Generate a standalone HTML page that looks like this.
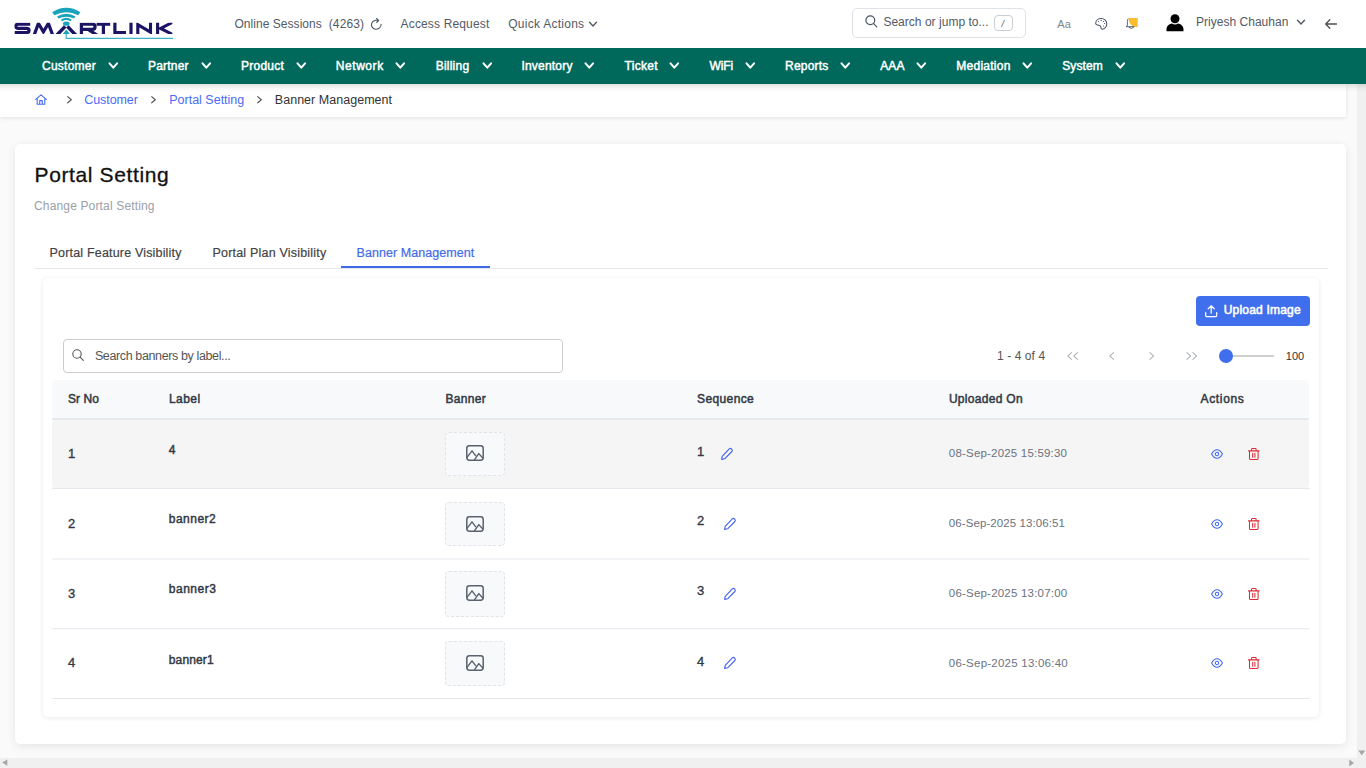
<!DOCTYPE html>
<html><head><meta charset="utf-8"><title>Banner Management</title>
<style>
*{box-sizing:border-box;margin:0;padding:0}
html,body{width:1366px;height:768px;overflow:hidden;background:#fafafa;font-family:"Liberation Sans",sans-serif;color:#212529}
.t{position:absolute;white-space:pre}
.a{position:absolute}
svg{position:absolute;overflow:visible}
#top{left:0;top:0;width:1366px;height:48px;background:#fff}
#nav{left:0;top:48px;width:1366px;height:36px;background:#00695c}
#crumb{left:0;top:84px;width:1346px;height:33px;background:#fff;box-shadow:0 1px 4px rgba(0,0,0,.10)}
#navsh{left:0;top:84px;width:1366px;height:8px;background:linear-gradient(rgba(0,0,0,.11),rgba(0,0,0,.03) 55%,rgba(0,0,0,0))}
#vs{left:1357px;top:84px;width:9px;height:674px;background:#f0f0f0}
#hs{left:0;top:758px;width:1366px;height:10px;background:#f0f0f0}
#card{left:15px;top:144px;width:1331px;height:600px;background:#fff;border-radius:5px;box-shadow:0 2px 8px rgba(0,0,0,.085)}
#card2{left:43px;top:278px;width:1275.5px;height:438.5px;background:#fff;border-radius:5px;box-shadow:0 1px 5px rgba(0,0,0,.085)}
</style></head><body>
<div id="top" class="a"></div><svg style="left:0;top:0" width="200" height="48" viewBox="0 0 200 48"><defs><clipPath id="lc"><rect x="14.3" y="22.7" width="158.1" height="11.4"/></clipPath></defs><g fill="none" stroke="#1b1464" stroke-width="3.2" stroke-linejoin="miter" clip-path="url(#lc)"><path d="M30.2 24.2 H18.4 Q15.8 24.2 15.8 26.3 Q15.8 28.4 18.4 28.4 H26.5 Q29.1 28.4 29.1 30.5 Q29.1 32.6 26.5 32.6 H14.6"/><path d="M33.8 36 L38.4 23.4 L43.4 31.8 L48.4 23.4 L53 36" stroke-width="3.2"/><path d="M55.6 36.4 L65.2 26.4 M77 36.4 L67.4 26.4" stroke-width="3.5"/><path d="M81.4 36 V24.2 H92.2 Q95.1 24.2 95.1 26.8 Q95.1 29.4 92.2 29.4 H81.4 M88 29.4 L97 35"/><path d="M96.6 24.2 H110.2 M103.4 24.2 V36"/><path d="M114.9 20 V32.6 H126"/><path d="M131 20 V36"/><path d="M137.8 36 V24.6 L150.5 32.2 V20" stroke-width="3.1"/><path d="M157.6 20 V36 M174 21.6 L160.6 28.4 L174 35.2" stroke-width="3.1"/></g><g fill="#1ba3bd"><path d="M52.2 12.3 Q66.3 3.4 80.4 12.3 L78.2 15.2 Q66.3 9.2 54.4 15.2 Z"/><path d="M57 16.4 Q66.3 11 75.6 16.4 L74 18.5 Q66.3 14.8 58.6 18.5 Z"/><path d="M60.8 19.8 Q66.3 15.8 71.8 19.8 L70.6 21.2 Q66.3 18.6 62 21.2 Z"/></g><ellipse cx="66.3" cy="23.7" rx="3.3" ry="2.1" fill="#1ba3bd"/><path d="M66.3 29.4 L62.8 33.9 H69.8 Z" fill="#1ba3bd"/><path d="M66.2 33.8 V38.3 H173" fill="none" stroke="#3fb2ca" stroke-width="1.2"/></svg><span class="t" style="left:234.5px;top:14px;font-size:12px;line-height:20px;color:#525a65;letter-spacing:0.039px;">Online Sessions</span><span class="t" style="left:328.7px;top:14px;font-size:12px;line-height:20px;color:#525a65;letter-spacing:0.135px;">(4263)</span><svg style="left:371px;top:18px" width="11" height="12" viewBox="0 0 11 12"><path d="M7.2 2.6 A4.8 4.5 0 1 0 10.05 6.4" fill="none" stroke="#4b5563" stroke-width="1.1" stroke-linecap="round"/><path d="M5.5 0.5 L7.7 2.4 L5.7 4.5" fill="none" stroke="#4b5563" stroke-width="1.1" stroke-linecap="round" stroke-linejoin="round"/></svg><span class="t" style="left:400.6px;top:14px;font-size:12px;line-height:20px;color:#525a65;letter-spacing:0.149px;">Access Request</span><span class="t" style="left:508.2px;top:14px;font-size:12px;line-height:20px;color:#525a65;letter-spacing:0.269px;">Quick Actions</span><svg style="left:589px;top:21.6px" width="8" height="4.6" viewBox="0 0 8 4.6"><path d="M0.5 0.3 L4.0 4.1 L7.5 0.3" fill="none" stroke="#525a65" stroke-width="1.4" stroke-linecap="round" stroke-linejoin="round"/></svg><div class="a" style="left:852px;top:8px;width:174px;height:30px;border:1px solid #dfe3e8;border-radius:5px;background:#fff"></div><svg style="left:865px;top:15px" width="13" height="13" viewBox="0 0 13 13"><circle cx="5.3" cy="5.3" r="4.4" fill="none" stroke="#4b5563" stroke-width="1.2"/><path d="M8.6 8.6 L11.8 11.8" stroke="#4b5563" stroke-width="1.2" stroke-linecap="round"/></svg><span class="t" style="left:883.4px;top:12px;font-size:12px;line-height:20px;color:#525a65;letter-spacing:0.024px;">Search or jump to...</span><div class="a" style="left:994px;top:15px;width:19px;height:16px;border:1px solid #c9ced4;border-radius:4px;background:#fff"></div><span class="t" style="left:1001.5px;top:16px;font-size:9px;line-height:16px;color:#555;font-style:italic;">/</span><span class="t" style="left:1057.3px;top:15px;font-size:11px;line-height:18px;color:#7d848c;letter-spacing:0.116px;">Aa</span><svg style="left:1095px;top:18px" width="13" height="12" viewBox="0 0 13 12"><path d="M0.7 5.5 C0.7 2.6 3.2 0.6 6.3 0.6 C9.4 0.6 11.8 2.8 11.8 5.7 C11.8 8.6 9.8 11.1 7.3 11.2 C6.5 11.2 6.1 10.8 6 10.2 L5.7 8.7 C5.5 7.9 5.1 7.6 4.4 7.4 L1.8 6.7 C1.1 6.5 0.7 6.1 0.7 5.5 Z" fill="none" stroke="#4b5563" stroke-width="1.05" stroke-linejoin="round"/><g fill="#4b5563"><circle cx="3.6" cy="3.3" r="0.62"/><circle cx="6.2" cy="2.4" r="0.62"/><circle cx="8.5" cy="3.3" r="0.62"/><circle cx="9.6" cy="5.5" r="0.62"/><circle cx="8.5" cy="8" r="0.62"/></g></svg><svg style="left:1125px;top:17px" width="14" height="14" viewBox="0 0 14 14"><defs><clipPath id="bc"><rect x="3.3" y="1.1" width="9.4" height="8.8"/></clipPath></defs><circle cx="12.7" cy="1.1" r="9.3" fill="#fabe2c" clip-path="url(#bc)"/><path d="M3 2 Q2.4 2.8 2.4 4.4 V8.2 Q2.4 9.2 1 9.7 H9" fill="none" stroke="#4b5563" stroke-width="0.9" stroke-linecap="round" stroke-linejoin="round"/><path d="M4.2 10.4 Q6.4 12.8 8.6 10.4" fill="none" stroke="#4b5563" stroke-width="0.95" stroke-linecap="round"/></svg><svg style="left:1165.8px;top:13.5px" width="18" height="18" viewBox="0 0 18 18"><circle cx="9" cy="4.7" r="4.5" fill="#000"/><path d="M0.5 17.2 V15.2 C0.5 12 3.6 9.9 6 9.6 Q9 11.4 12 9.6 C14.4 9.9 17.5 12 17.5 15.2 V17.2 Z" fill="#000"/></svg><span class="t" style="left:1196px;top:12px;font-size:12px;line-height:20px;color:#525a65;letter-spacing:0.023px;">Priyesh Chauhan</span><svg style="left:1296.8px;top:19.6px" width="8" height="4.6" viewBox="0 0 8 4.6"><path d="M0.5 0.3 L4.0 4.1 L7.5 0.3" fill="none" stroke="#525a65" stroke-width="1.4" stroke-linecap="round" stroke-linejoin="round"/></svg><svg style="left:1325px;top:19px" width="12" height="10" viewBox="0 0 12 10"><path d="M11.5 5 H0.8 M4.8 0.8 L0.7 5 L4.8 9.2" fill="none" stroke="#495057" stroke-width="1.3" stroke-linecap="round" stroke-linejoin="round"/></svg>
<div id="nav" class="a"></div><span class="t" style="left:42px;top:56px;font-size:12px;line-height:20px;color:#fff;letter-spacing:0.248px;-webkit-text-stroke:0.45px #fff;">Customer</span><svg style="left:109px;top:63.2px" width="8.6" height="5.2" viewBox="0 0 8.6 5.2"><path d="M0.5 0.3 L4.3 4.7 L8.1 0.3" fill="none" stroke="#fff" stroke-width="2.0" stroke-linecap="round" stroke-linejoin="round"/></svg><span class="t" style="left:148px;top:56px;font-size:12px;line-height:20px;color:#fff;letter-spacing:0.192px;-webkit-text-stroke:0.45px #fff;">Partner</span><svg style="left:202px;top:63.2px" width="8.6" height="5.2" viewBox="0 0 8.6 5.2"><path d="M0.5 0.3 L4.3 4.7 L8.1 0.3" fill="none" stroke="#fff" stroke-width="2.0" stroke-linecap="round" stroke-linejoin="round"/></svg><span class="t" style="left:241px;top:56px;font-size:12px;line-height:20px;color:#fff;letter-spacing:0.234px;-webkit-text-stroke:0.45px #fff;">Product</span><svg style="left:296.5px;top:63.2px" width="8.6" height="5.2" viewBox="0 0 8.6 5.2"><path d="M0.5 0.3 L4.3 4.7 L8.1 0.3" fill="none" stroke="#fff" stroke-width="2.0" stroke-linecap="round" stroke-linejoin="round"/></svg><span class="t" style="left:335.8px;top:56px;font-size:12px;line-height:20px;color:#fff;letter-spacing:0.555px;-webkit-text-stroke:0.45px #fff;">Network</span><svg style="left:396.4px;top:63.2px" width="8.6" height="5.2" viewBox="0 0 8.6 5.2"><path d="M0.5 0.3 L4.3 4.7 L8.1 0.3" fill="none" stroke="#fff" stroke-width="2.0" stroke-linecap="round" stroke-linejoin="round"/></svg><span class="t" style="left:435.7px;top:56px;font-size:12px;line-height:20px;color:#fff;letter-spacing:0.226px;-webkit-text-stroke:0.45px #fff;">Billing</span><svg style="left:482.5px;top:63.2px" width="8.6" height="5.2" viewBox="0 0 8.6 5.2"><path d="M0.5 0.3 L4.3 4.7 L8.1 0.3" fill="none" stroke="#fff" stroke-width="2.0" stroke-linecap="round" stroke-linejoin="round"/></svg><span class="t" style="left:521.4px;top:56px;font-size:12px;line-height:20px;color:#fff;letter-spacing:0.205px;-webkit-text-stroke:0.45px #fff;">Inventory</span><svg style="left:585.3px;top:63.2px" width="8.6" height="5.2" viewBox="0 0 8.6 5.2"><path d="M0.5 0.3 L4.3 4.7 L8.1 0.3" fill="none" stroke="#fff" stroke-width="2.0" stroke-linecap="round" stroke-linejoin="round"/></svg><span class="t" style="left:624.5px;top:56px;font-size:12px;line-height:20px;color:#fff;letter-spacing:0.306px;-webkit-text-stroke:0.45px #fff;">Ticket</span><svg style="left:670.4px;top:63.2px" width="8.6" height="5.2" viewBox="0 0 8.6 5.2"><path d="M0.5 0.3 L4.3 4.7 L8.1 0.3" fill="none" stroke="#fff" stroke-width="2.0" stroke-linecap="round" stroke-linejoin="round"/></svg><span class="t" style="left:709.5px;top:56px;font-size:12px;line-height:20px;color:#fff;letter-spacing:-0.125px;-webkit-text-stroke:0.45px #fff;">WiFi</span><svg style="left:746.2px;top:63.2px" width="8.6" height="5.2" viewBox="0 0 8.6 5.2"><path d="M0.5 0.3 L4.3 4.7 L8.1 0.3" fill="none" stroke="#fff" stroke-width="2.0" stroke-linecap="round" stroke-linejoin="round"/></svg><span class="t" style="left:785px;top:56px;font-size:12px;line-height:20px;color:#fff;letter-spacing:0.21px;-webkit-text-stroke:0.45px #fff;">Reports</span><svg style="left:841px;top:63.2px" width="8.6" height="5.2" viewBox="0 0 8.6 5.2"><path d="M0.5 0.3 L4.3 4.7 L8.1 0.3" fill="none" stroke="#fff" stroke-width="2.0" stroke-linecap="round" stroke-linejoin="round"/></svg><span class="t" style="left:880.3px;top:56px;font-size:12px;line-height:20px;color:#fff;letter-spacing:0.061px;-webkit-text-stroke:0.45px #fff;">AAA</span><svg style="left:916.6px;top:63.2px" width="8.6" height="5.2" viewBox="0 0 8.6 5.2"><path d="M0.5 0.3 L4.3 4.7 L8.1 0.3" fill="none" stroke="#fff" stroke-width="2.0" stroke-linecap="round" stroke-linejoin="round"/></svg><span class="t" style="left:956.3px;top:56px;font-size:12px;line-height:20px;color:#fff;letter-spacing:0.252px;-webkit-text-stroke:0.45px #fff;">Mediation</span><svg style="left:1023.3px;top:63.2px" width="8.6" height="5.2" viewBox="0 0 8.6 5.2"><path d="M0.5 0.3 L4.3 4.7 L8.1 0.3" fill="none" stroke="#fff" stroke-width="2.0" stroke-linecap="round" stroke-linejoin="round"/></svg><span class="t" style="left:1062.2px;top:56px;font-size:12px;line-height:20px;color:#fff;letter-spacing:0.097px;-webkit-text-stroke:0.45px #fff;">System</span><svg style="left:1116px;top:63.2px" width="8.6" height="5.2" viewBox="0 0 8.6 5.2"><path d="M0.5 0.3 L4.3 4.7 L8.1 0.3" fill="none" stroke="#fff" stroke-width="2.0" stroke-linecap="round" stroke-linejoin="round"/></svg>
<div id="crumb" class="a"></div><svg style="left:35px;top:94px" width="12" height="11" viewBox="0 0 12 11"><path d="M0.7 5.4 L6 0.8 L11.3 5.4 M2.2 4.4 V10.3 H9.8 V4.4 M4.7 10.3 V6.6 H7.3 V10.3" fill="none" stroke="#4a6cf7" stroke-width="1.1" stroke-linecap="round" stroke-linejoin="round"/></svg><svg style="left:66.7px;top:96.2px" width="5" height="7.4" viewBox="0 0 5 7.4"><path d="M0.7 0.6 L4.3 3.7 L0.7 6.8" fill="none" stroke="#555" stroke-width="1.15" stroke-linecap="round" stroke-linejoin="round"/></svg><span class="t" style="left:84.3px;top:90px;font-size:12.5px;line-height:20px;color:#4a6cf7;letter-spacing:-0.086px;">Customer</span><svg style="left:151.3px;top:96.2px" width="5" height="7.4" viewBox="0 0 5 7.4"><path d="M0.7 0.6 L4.3 3.7 L0.7 6.8" fill="none" stroke="#555" stroke-width="1.15" stroke-linecap="round" stroke-linejoin="round"/></svg><span class="t" style="left:169.2px;top:90px;font-size:12.5px;line-height:20px;color:#4a6cf7;letter-spacing:0.004px;">Portal Setting</span><svg style="left:256.8px;top:96.2px" width="5" height="7.4" viewBox="0 0 5 7.4"><path d="M0.7 0.6 L4.3 3.7 L0.7 6.8" fill="none" stroke="#555" stroke-width="1.15" stroke-linecap="round" stroke-linejoin="round"/></svg><span class="t" style="left:274.8px;top:90px;font-size:12.5px;line-height:20px;color:#333;letter-spacing:0.032px;">Banner Management</span>
<div id="card" class="a"></div><div id="card2" class="a"></div>
<span class="t" style="left:34.5px;top:160px;font-size:21px;line-height:29px;color:#111;letter-spacing:0.63px;-webkit-text-stroke:0.3px #111;">Portal Setting</span><span class="t" style="left:34px;top:196px;font-size:12px;line-height:20px;color:#9aa0a8;letter-spacing:0.156px;">Change Portal Setting</span><span class="t" style="left:49.6px;top:243px;font-size:12.5px;line-height:20px;color:#444;letter-spacing:0.176px;-webkit-text-stroke:0.2px #444;">Portal Feature Visibility</span><span class="t" style="left:212.5px;top:243px;font-size:12.5px;line-height:20px;color:#444;letter-spacing:0.198px;-webkit-text-stroke:0.2px #444;">Portal Plan Visibility</span><span class="t" style="left:356.6px;top:243px;font-size:12.5px;line-height:20px;color:#3f6be8;letter-spacing:0.05px;-webkit-text-stroke:0.2px #3f6be8;">Banner Management</span><div class="a" style="left:34px;top:268px;width:1294px;height:1px;background:#e6e7e9"></div><div class="a" style="left:341px;top:266px;width:149px;height:2px;background:#3f6be8"></div>
<div class="a" style="left:1196px;top:296px;width:114px;height:30px;background:#3f6fec;border-radius:4px"></div><svg style="left:1205px;top:304.5px" width="12.4" height="12.4" viewBox="0 0 12.4 12.4"><path d="M6.2 8.2 V1 M3.2 3.8 L6.2 0.8 L9.2 3.8 M0.7 7.6 V10.4 Q0.7 11.7 2 11.7 H10.4 Q11.7 11.7 11.7 10.4 V7.6" fill="none" stroke="#fff" stroke-width="1.25" stroke-linecap="round" stroke-linejoin="round"/></svg><span class="t" style="left:1223.7px;top:300px;font-size:12px;line-height:20px;color:#fff;letter-spacing:0.207px;-webkit-text-stroke:0.55px #fff;">Upload Image</span><div class="a" style="left:63px;top:339px;width:500px;height:34px;border:1px solid #c9cdd2;border-radius:4px;background:#fff"></div><svg style="left:72.4px;top:349.4px" width="12" height="12" viewBox="0 0 12 12"><circle cx="5" cy="5" r="4.2" fill="none" stroke="#555" stroke-width="1.1"/><path d="M8.1 8.1 L11.3 11.3" stroke="#555" stroke-width="1.1" stroke-linecap="round"/></svg><span class="t" style="left:94.9px;top:346px;font-size:12.5px;line-height:20px;color:#555;letter-spacing:-0.374px;">Search banners by label...</span><span class="t" style="left:997px;top:346px;font-size:12px;line-height:20px;color:#555;letter-spacing:0.083px;">1 - 4 of 4</span><svg style="left:1067px;top:352px" width="5.4" height="8" viewBox="0 0 5.4 8"><path d="M4.6 0.6 L0.8 4 L4.6 7.4" fill="none" stroke="#b4b8bd" stroke-width="1.1" stroke-linecap="round" stroke-linejoin="round"/></svg><svg style="left:1073px;top:352px" width="5.4" height="8" viewBox="0 0 5.4 8"><path d="M4.6 0.6 L0.8 4 L4.6 7.4" fill="none" stroke="#b4b8bd" stroke-width="1.1" stroke-linecap="round" stroke-linejoin="round"/></svg><svg style="left:1109.3px;top:352px" width="5.4" height="8" viewBox="0 0 5.4 8"><path d="M4.6 0.6 L0.8 4 L4.6 7.4" fill="none" stroke="#b4b8bd" stroke-width="1.1" stroke-linecap="round" stroke-linejoin="round"/></svg><svg style="left:1148.8px;top:352px" width="5.4" height="8" viewBox="0 0 5.4 8"><path d="M0.8 0.6 L4.6 4 L0.8 7.4" fill="none" stroke="#b4b8bd" stroke-width="1.1" stroke-linecap="round" stroke-linejoin="round"/></svg><svg style="left:1186.3px;top:352px" width="5.4" height="8" viewBox="0 0 5.4 8"><path d="M0.8 0.6 L4.6 4 L0.8 7.4" fill="none" stroke="#b4b8bd" stroke-width="1.1" stroke-linecap="round" stroke-linejoin="round"/></svg><svg style="left:1192.3px;top:352px" width="5.4" height="8" viewBox="0 0 5.4 8"><path d="M0.8 0.6 L4.6 4 L0.8 7.4" fill="none" stroke="#b4b8bd" stroke-width="1.1" stroke-linecap="round" stroke-linejoin="round"/></svg><div class="a" style="left:1226px;top:354.7px;width:48px;height:2px;background:#cfcfcf"></div><div class="a" style="left:1218.8px;top:348.5px;width:14.6px;height:14.6px;border-radius:50%;background:#3f6fec"></div><span class="t" style="left:1285.8px;top:347px;font-size:11px;line-height:18px;color:#333;letter-spacing:0.014px;">100</span>
<div class="a" style="left:52px;top:380.3px;width:1257px;height:38px;background:#f8f9fb;border-radius:5px 5px 0 0"></div><div class="a" style="left:52px;top:418px;width:1257px;height:1.6px;background:#e6e9ed"></div><span class="t" style="left:67.9px;top:389px;font-size:12px;line-height:20px;color:#333a45;letter-spacing:0.102px;-webkit-text-stroke:0.5px #333a45;">Sr No</span><span class="t" style="left:168.9px;top:389px;font-size:12px;line-height:20px;color:#333a45;letter-spacing:0.485px;-webkit-text-stroke:0.5px #333a45;">Label</span><span class="t" style="left:445.5px;top:389px;font-size:12px;line-height:20px;color:#333a45;letter-spacing:0.299px;-webkit-text-stroke:0.5px #333a45;">Banner</span><span class="t" style="left:697.1px;top:389px;font-size:12px;line-height:20px;color:#333a45;letter-spacing:0.369px;-webkit-text-stroke:0.5px #333a45;">Sequence</span><span class="t" style="left:948.9px;top:389px;font-size:12px;line-height:20px;color:#333a45;letter-spacing:0.298px;-webkit-text-stroke:0.5px #333a45;">Uploaded On</span><span class="t" style="left:1200.6px;top:389px;font-size:12px;line-height:20px;color:#333a45;letter-spacing:0.634px;-webkit-text-stroke:0.5px #333a45;">Actions</span><div class="a" style="left:52px;top:419.60px;width:1257px;height:68.40px;background:#f5f5f5;border-radius:3px"></div><div class="a" style="left:52px;top:488px;width:1257.5px;height:1px;background:rgb(227, 231, 236);border-radius:0 0 3px 3px"></div><span class="t" style="left:67.9px;top:443px;font-size:13px;line-height:21px;color:#323844;-webkit-text-stroke:0.35px #323844;">1</span><span class="t" style="left:168.8px;top:440px;font-size:12px;line-height:20px;color:#323844;-webkit-text-stroke:0.45px #323844;">4</span><div class="a" style="left:445px;top:432px;width:60px;height:44px;border:1px dashed #e0e4e9;border-radius:4px;background:#f8f9fb"></div><svg style="left:466px;top:445px" width="18" height="16" viewBox="0 0 18 16"><rect x="0.8" y="0.8" width="16.4" height="14.4" rx="2.6" fill="none" stroke="#5a6270" stroke-width="1.5"/><path d="M1.2 12.2 L6 5.8 L9.6 10.6 M8.6 14.6 L12.8 8.6 L16.8 13" fill="none" stroke="#5a6270" stroke-width="1.4" stroke-linejoin="round" stroke-linecap="round"/></svg><span class="t" style="left:696.9px;top:441px;font-size:13px;line-height:21px;color:#323844;-webkit-text-stroke:0.35px #323844;">1</span><svg style="left:721px;top:447.80px" width="12" height="12" viewBox="0 0 12 12"><path d="M8.3 0.9 Q9.5 -0.1 10.7 1.1 Q11.9 2.3 10.9 3.5 L3.6 10.8 L0.6 11.4 L1.2 8.4 Z" fill="none" stroke="#4361ee" stroke-width="1.1" stroke-linejoin="round"/></svg><span class="t" style="left:948.8px;top:444px;font-size:11.5px;line-height:18px;color:#6b7280;letter-spacing:0.197px;">08-Sep-2025 15:59:30</span><svg style="left:1210.8px;top:448.60px" width="12" height="10" viewBox="0 0 12 10"><path d="M0.6 5 C2 2.4 3.8 0.7 6 0.7 C8.2 0.7 10 2.4 11.4 5 C10 7.6 8.2 9.3 6 9.3 C3.8 9.3 2 7.6 0.6 5 Z" fill="none" stroke="#3d66f0" stroke-width="1.05" stroke-linejoin="round"/><circle cx="6" cy="5" r="1.7" fill="none" stroke="#3d66f0" stroke-width="1.05"/></svg><svg style="left:1247.7px;top:447.80px" width="11.6" height="12.2" viewBox="0 0 11.6 12.2"><path d="M0.5 2.9 H11.1 M3.5 2.7 V1.3 Q3.5 0.6 4.2 0.6 H7.4 Q8.1 0.6 8.1 1.3 V2.7 M1.5 3 V10.5 Q1.5 11.6 2.6 11.6 H9 Q10.1 11.6 10.1 10.5 V3 M4.7 5.3 V9.2 M6.9 5.3 V9.2" fill="none" stroke="#da2c38" stroke-width="1.05" stroke-linecap="round" stroke-linejoin="round"/></svg><div class="a" style="left:52px;top:489.00px;width:1257px;height:70.00px;background:#fff;border-radius:3px"></div><div class="a" style="left:52px;top:558px;width:1257.5px;height:1px;background:rgb(242, 244, 246);border-radius:0 0 3px 3px"></div><div class="a" style="left:52px;top:559px;width:1257.5px;height:1px;background:rgb(240, 242, 245);border-radius:0 0 3px 3px"></div><span class="t" style="left:67.9px;top:513px;font-size:13px;line-height:21px;color:#323844;-webkit-text-stroke:0.35px #323844;">2</span><span class="t" style="left:168.8px;top:509px;font-size:12px;line-height:20px;color:#323844;letter-spacing:0.479px;-webkit-text-stroke:0.45px #323844;">banner2</span><div class="a" style="left:445px;top:502px;width:60px;height:44px;border:1px dashed #e0e4e9;border-radius:4px;background:#f8f9fb"></div><svg style="left:466px;top:516px" width="18" height="16" viewBox="0 0 18 16"><rect x="0.8" y="0.8" width="16.4" height="14.4" rx="2.6" fill="none" stroke="#5a6270" stroke-width="1.5"/><path d="M1.2 12.2 L6 5.8 L9.6 10.6 M8.6 14.6 L12.8 8.6 L16.8 13" fill="none" stroke="#5a6270" stroke-width="1.4" stroke-linejoin="round" stroke-linecap="round"/></svg><span class="t" style="left:696.9px;top:510px;font-size:13px;line-height:21px;color:#323844;-webkit-text-stroke:0.35px #323844;">2</span><svg style="left:724px;top:517.80px" width="12" height="12" viewBox="0 0 12 12"><path d="M8.3 0.9 Q9.5 -0.1 10.7 1.1 Q11.9 2.3 10.9 3.5 L3.6 10.8 L0.6 11.4 L1.2 8.4 Z" fill="none" stroke="#4361ee" stroke-width="1.1" stroke-linejoin="round"/></svg><span class="t" style="left:948.8px;top:514px;font-size:11.5px;line-height:18px;color:#6b7280;letter-spacing:0.087px;">06-Sep-2025 13:06:51</span><svg style="left:1210.8px;top:518.60px" width="12" height="10" viewBox="0 0 12 10"><path d="M0.6 5 C2 2.4 3.8 0.7 6 0.7 C8.2 0.7 10 2.4 11.4 5 C10 7.6 8.2 9.3 6 9.3 C3.8 9.3 2 7.6 0.6 5 Z" fill="none" stroke="#3d66f0" stroke-width="1.05" stroke-linejoin="round"/><circle cx="6" cy="5" r="1.7" fill="none" stroke="#3d66f0" stroke-width="1.05"/></svg><svg style="left:1247.7px;top:517.80px" width="11.6" height="12.2" viewBox="0 0 11.6 12.2"><path d="M0.5 2.9 H11.1 M3.5 2.7 V1.3 Q3.5 0.6 4.2 0.6 H7.4 Q8.1 0.6 8.1 1.3 V2.7 M1.5 3 V10.5 Q1.5 11.6 2.6 11.6 H9 Q10.1 11.6 10.1 10.5 V3 M4.7 5.3 V9.2 M6.9 5.3 V9.2" fill="none" stroke="#da2c38" stroke-width="1.05" stroke-linecap="round" stroke-linejoin="round"/></svg><div class="a" style="left:52px;top:560.00px;width:1257px;height:69.00px;background:#fff;border-radius:3px"></div><div class="a" style="left:52px;top:628px;width:1257.5px;height:1px;background:rgb(234, 237, 241);border-radius:0 0 3px 3px"></div><div class="a" style="left:52px;top:629px;width:1257.5px;height:1px;background:rgb(247, 248, 249);border-radius:0 0 3px 3px"></div><span class="t" style="left:67.9px;top:583px;font-size:13px;line-height:21px;color:#323844;-webkit-text-stroke:0.35px #323844;">3</span><span class="t" style="left:168.8px;top:579px;font-size:12px;line-height:20px;color:#323844;letter-spacing:0.508px;-webkit-text-stroke:0.45px #323844;">banner3</span><div class="a" style="left:445px;top:571px;width:60px;height:46px;border:1px dashed #e0e4e9;border-radius:4px;background:#f8f9fb"></div><svg style="left:466px;top:585px" width="18" height="16" viewBox="0 0 18 16"><rect x="0.8" y="0.8" width="16.4" height="14.4" rx="2.6" fill="none" stroke="#5a6270" stroke-width="1.5"/><path d="M1.2 12.2 L6 5.8 L9.6 10.6 M8.6 14.6 L12.8 8.6 L16.8 13" fill="none" stroke="#5a6270" stroke-width="1.4" stroke-linejoin="round" stroke-linecap="round"/></svg><span class="t" style="left:696.9px;top:580px;font-size:13px;line-height:21px;color:#323844;-webkit-text-stroke:0.35px #323844;">3</span><svg style="left:724px;top:587.80px" width="12" height="12" viewBox="0 0 12 12"><path d="M8.3 0.9 Q9.5 -0.1 10.7 1.1 Q11.9 2.3 10.9 3.5 L3.6 10.8 L0.6 11.4 L1.2 8.4 Z" fill="none" stroke="#4361ee" stroke-width="1.1" stroke-linejoin="round"/></svg><span class="t" style="left:948.8px;top:584px;font-size:11.5px;line-height:18px;color:#6b7280;letter-spacing:0.207px;">06-Sep-2025 13:07:00</span><svg style="left:1210.8px;top:588.60px" width="12" height="10" viewBox="0 0 12 10"><path d="M0.6 5 C2 2.4 3.8 0.7 6 0.7 C8.2 0.7 10 2.4 11.4 5 C10 7.6 8.2 9.3 6 9.3 C3.8 9.3 2 7.6 0.6 5 Z" fill="none" stroke="#3d66f0" stroke-width="1.05" stroke-linejoin="round"/><circle cx="6" cy="5" r="1.7" fill="none" stroke="#3d66f0" stroke-width="1.05"/></svg><svg style="left:1247.7px;top:587.80px" width="11.6" height="12.2" viewBox="0 0 11.6 12.2"><path d="M0.5 2.9 H11.1 M3.5 2.7 V1.3 Q3.5 0.6 4.2 0.6 H7.4 Q8.1 0.6 8.1 1.3 V2.7 M1.5 3 V10.5 Q1.5 11.6 2.6 11.6 H9 Q10.1 11.6 10.1 10.5 V3 M4.7 5.3 V9.2 M6.9 5.3 V9.2" fill="none" stroke="#da2c38" stroke-width="1.05" stroke-linecap="round" stroke-linejoin="round"/></svg><div class="a" style="left:52px;top:630.00px;width:1257px;height:68.00px;background:#fff;border-radius:3px"></div><div class="a" style="left:52px;top:698px;width:1257.5px;height:1px;background:rgb(227, 231, 236);border-radius:0 0 3px 3px"></div><span class="t" style="left:67.9px;top:652px;font-size:13px;line-height:21px;color:#323844;-webkit-text-stroke:0.35px #323844;">4</span><span class="t" style="left:168.8px;top:650px;font-size:12px;line-height:20px;color:#323844;letter-spacing:0.122px;-webkit-text-stroke:0.45px #323844;">banner1</span><div class="a" style="left:445px;top:641px;width:60px;height:45px;border:1px dashed #e0e4e9;border-radius:4px;background:#f8f9fb"></div><svg style="left:466px;top:655px" width="18" height="16" viewBox="0 0 18 16"><rect x="0.8" y="0.8" width="16.4" height="14.4" rx="2.6" fill="none" stroke="#5a6270" stroke-width="1.5"/><path d="M1.2 12.2 L6 5.8 L9.6 10.6 M8.6 14.6 L12.8 8.6 L16.8 13" fill="none" stroke="#5a6270" stroke-width="1.4" stroke-linejoin="round" stroke-linecap="round"/></svg><span class="t" style="left:696.9px;top:651px;font-size:13px;line-height:21px;color:#323844;-webkit-text-stroke:0.35px #323844;">4</span><svg style="left:724px;top:656.80px" width="12" height="12" viewBox="0 0 12 12"><path d="M8.3 0.9 Q9.5 -0.1 10.7 1.1 Q11.9 2.3 10.9 3.5 L3.6 10.8 L0.6 11.4 L1.2 8.4 Z" fill="none" stroke="#4361ee" stroke-width="1.1" stroke-linejoin="round"/></svg><span class="t" style="left:948.8px;top:654px;font-size:11.5px;line-height:18px;color:#6b7280;letter-spacing:0.232px;">06-Sep-2025 13:06:40</span><svg style="left:1210.8px;top:657.60px" width="12" height="10" viewBox="0 0 12 10"><path d="M0.6 5 C2 2.4 3.8 0.7 6 0.7 C8.2 0.7 10 2.4 11.4 5 C10 7.6 8.2 9.3 6 9.3 C3.8 9.3 2 7.6 0.6 5 Z" fill="none" stroke="#3d66f0" stroke-width="1.05" stroke-linejoin="round"/><circle cx="6" cy="5" r="1.7" fill="none" stroke="#3d66f0" stroke-width="1.05"/></svg><svg style="left:1247.7px;top:656.80px" width="11.6" height="12.2" viewBox="0 0 11.6 12.2"><path d="M0.5 2.9 H11.1 M3.5 2.7 V1.3 Q3.5 0.6 4.2 0.6 H7.4 Q8.1 0.6 8.1 1.3 V2.7 M1.5 3 V10.5 Q1.5 11.6 2.6 11.6 H9 Q10.1 11.6 10.1 10.5 V3 M4.7 5.3 V9.2 M6.9 5.3 V9.2" fill="none" stroke="#da2c38" stroke-width="1.05" stroke-linecap="round" stroke-linejoin="round"/></svg>
<div id="vs" class="a"></div><div id="hs" class="a"></div><div id="navsh" class="a"></div>
<svg style="left:0;top:0" width="1366" height="768" viewBox="0 0 1366 768"><path d="M1358.3 750.5 H1365.2 L1361.75 755.3 Z M1349.3 759.5 L1354 762.9 L1349.3 766.3 Z M7.3 759.4 L2.2 762.6 L7.3 765.8 Z" fill="#a5a5a5"/></svg>
</body></html>
